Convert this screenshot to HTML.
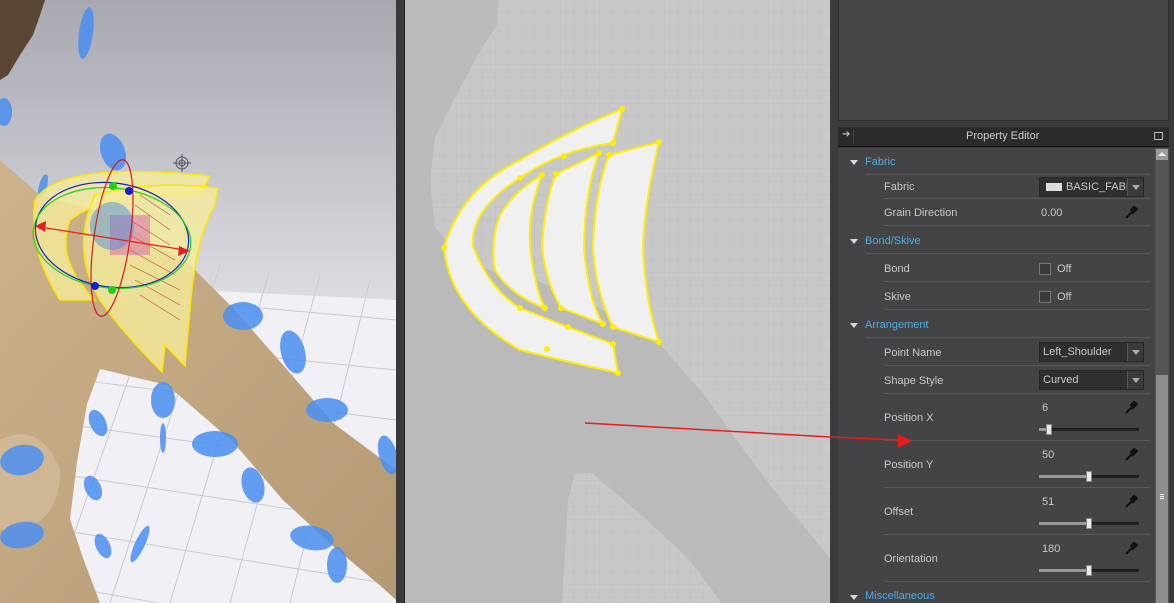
<!DOCTYPE html>
<html><head><meta charset="utf-8"><style>
*{margin:0;padding:0;box-sizing:border-box}
html,body{width:1174px;height:603px;overflow:hidden}
body{background:#2e2e2e;font-family:"Liberation Sans",sans-serif;position:relative}
.abs{position:absolute}
.t{position:absolute;font-size:11px;color:#c8c8c8;white-space:nowrap}
.sec{color:#4aaee6}
.ln{position:absolute;height:1px;background:#5a5a5c}
.tri{position:absolute;width:0;height:0;border-left:4px solid transparent;border-right:4px solid transparent;border-top:5px solid #d8d8d8}
.dd{position:absolute;background:#2f2f31;border:1px solid #262626;height:20px}
.dd .a{position:absolute;right:0;top:0;width:16px;height:18px;border-left:1px solid #555;background:#3a3a3c}
.dd .a:after{content:"";position:absolute;left:4px;top:7px;border-left:4px solid transparent;border-right:4px solid transparent;border-top:5px solid #aaa}
.cb{position:absolute;width:12px;height:12px;background:#3a3a3c;border:1px solid #777}
.trk{position:absolute;height:3px;background:#222;border-top:1px solid #1a1a1a}
.fill{position:absolute;height:3px;background:#999}
.thumb{position:absolute;width:6px;height:11px;background:#e8e8e8;border:1px solid #888}
.wr{position:absolute;width:14px;height:14px}
</style></head><body>

<!-- Left 3D viewport -->
<svg class="abs" style="left:0;top:0" width="396" height="603" viewBox="0 0 396 603">
<defs>
<linearGradient id="bg" x1="0" y1="0" x2="0" y2="1">
<stop offset="0" stop-color="#a8a8b0"/><stop offset="0.5" stop-color="#dcdce2"/><stop offset="1" stop-color="#e4e4ea"/></linearGradient>
<linearGradient id="sk" x1="0" y1="0" x2="1" y2="1"><stop offset="0" stop-color="#cdb38c"/><stop offset="1" stop-color="#b39a74"/></linearGradient>
</defs>
<rect width="396" height="603" fill="url(#bg)"/>
<polygon points="0,280 396,300 396,603 0,603" fill="#f1f1f5"/>
<g stroke="#c9c9d0" stroke-width="1" fill="none">
<path d="M60,290 L396,320 M0,330 L396,370 M0,370 L396,420 M0,415 L396,470 M0,465 L396,525 M0,520 L396,585 M0,575 L396,645"/>
<path d="M270,270 L170,603 M320,275 L230,603 M370,280 L290,603 M220,265 L110,603 M170,260 L50,603 M120,255 L0,590"/>
</g>
<polygon points="0,160 40,195 110,215 190,265 233,308 283,365 333,423 396,470 396,600 383,588 333,546 283,500 233,442 167,385 100,369 87,404 77,462 70,519 83,558 100,603 0,603" fill="url(#sk)"/>
<path d="M0,440 Q40,420 60,470 Q60,520 20,530 L0,530Z" fill="#d8c2a0" opacity="0.6"/>
<path d="M0,0 L45,0 L40,15 L33,35 L20,55 L8,75 L0,80Z" fill="#5a4634"/>
<g fill="#4a8ef0" opacity="0.85">
<ellipse cx="86" cy="33" rx="7" ry="26" transform="rotate(8 86 33)"/>
<ellipse cx="4" cy="112" rx="8" ry="14"/>
<ellipse cx="113" cy="152" rx="12" ry="19" transform="rotate(-20 113 152)"/>
<ellipse cx="243" cy="316" rx="20" ry="14"/>
<ellipse cx="293" cy="352" rx="12" ry="22" transform="rotate(-15 293 352)"/>
<ellipse cx="163" cy="400" rx="12" ry="18"/>
<ellipse cx="327" cy="410" rx="21" ry="12"/>
<ellipse cx="98" cy="423" rx="8" ry="14" transform="rotate(-25 98 423)"/>
<ellipse cx="215" cy="444" rx="23" ry="13"/>
<ellipse cx="163" cy="438" rx="3" ry="15"/>
<ellipse cx="253" cy="485" rx="11" ry="18" transform="rotate(-15 253 485)"/>
<ellipse cx="22" cy="460" rx="22" ry="15" transform="rotate(-10 22 460)"/>
<ellipse cx="388" cy="455" rx="9" ry="20" transform="rotate(-15 388 455)"/>
<ellipse cx="93" cy="488" rx="8" ry="13" transform="rotate(-25 93 488)"/>
<ellipse cx="22" cy="535" rx="22" ry="13" transform="rotate(-10 22 535)"/>
<ellipse cx="103" cy="546" rx="7" ry="13" transform="rotate(-25 103 546)"/>
<ellipse cx="140" cy="544" rx="5" ry="20" transform="rotate(25 140 544)"/>
<ellipse cx="312" cy="538" rx="22" ry="12" transform="rotate(10 312 538)"/>
<ellipse cx="337" cy="565" rx="10" ry="18"/>
<ellipse cx="43" cy="186" rx="4" ry="12" transform="rotate(15 43 186)"/>
</g>
<g fill="#f5ec9a" fill-opacity="0.8" stroke="#ffe600" stroke-width="1.5">
<path d="M35,200 Q60,160 210,176 L200,195 Q110,190 70,220 Q55,260 95,300 L60,300 Q28,250 35,200Z"/>
<path d="M95,195 Q150,180 218,188 L215,205 Q195,240 190,310 L185,366 L165,345 L162,372 Q120,330 100,300 Q70,250 95,195Z"/>
</g>
<g stroke="#c03030" stroke-width="0.8" opacity="0.6"><path d="M140,195 L170,215 M135,205 L170,230 M130,220 L170,245 M130,235 L175,260 M130,250 L175,275 M130,265 L180,290 M135,280 L180,305 M140,295 L180,320"/></g>
<rect x="110" y="215" width="40" height="40" fill="#d040b0" opacity="0.4"/>
<ellipse cx="112" cy="226" rx="22" ry="24" fill="#5090e0" opacity="0.5"/>
<ellipse cx="112" cy="235" rx="77" ry="52" transform="rotate(8 112 235)" fill="none" stroke="#1020d0" stroke-width="1.2"/>
<ellipse cx="112" cy="238" rx="79" ry="50" transform="rotate(6 112 238)" fill="none" stroke="#20d020" stroke-width="1.2"/>
<ellipse cx="112" cy="238" rx="18" ry="79" transform="rotate(8 112 238)" fill="none" stroke="#d02020" stroke-width="1.2"/>
<line x1="40" y1="227" x2="185" y2="250" stroke="#e02020" stroke-width="1.2"/>
<polygon points="35,226 46,221 45,232" fill="#e02020"/><polygon points="190,251 179,246 178,256" fill="#e02020"/>
<circle cx="113" cy="186" r="4" fill="#20d020"/><circle cx="129" cy="191" r="4" fill="#1020d0"/>
<circle cx="95" cy="286" r="4" fill="#1020d0"/><circle cx="112" cy="290" r="4" fill="#20d020"/>
<g stroke="#556" fill="none" stroke-width="1"><circle cx="182" cy="163" r="6"/><circle cx="182" cy="163" r="3"/><path d="M182,154v18M173,163h18"/></g>
</svg>
<div class="abs" style="left:396px;top:0;width:9px;height:603px;background:#3a3a3c;border-right:1px solid #222"></div>

<!-- Middle 2D view -->
<svg class="abs" style="left:405px;top:0" width="425" height="603" viewBox="405 0 425 603">
<defs><pattern id="g" x="405" y="0" width="13" height="13" patternUnits="userSpaceOnUse"><path d="M13,0V13H0" fill="none" stroke="#bfbfbf" stroke-width="1"/></pattern></defs>
<rect x="405" y="0" width="425" height="603" fill="#c8c8c8"/>
<rect x="405" y="0" width="425" height="603" fill="url(#g)"/>
<path d="M405,0 L498,0 L497,25 L478,54 L458,92 L435,138 L430,181 L435,227 L455,254 L485,269 L538,281 L592,304 L658,342 L705,396 L738,442 L772,488 L830,558 L830,603 L722,603 L688,558 L638,512 L592,473 L575,473 L568,500 L562,603 L405,603Z" fill="#bababa"/>
<g fill="#f0f0f0" stroke="#ffee00" stroke-width="2">
<path d="M622,109 L613,143 Q560,150 520,178 Q470,210 473,246 Q490,290 520,308 L568,327 L613,344 L618,373 Q560,360 520,350 Q450,310 444,248 Q460,190 520,160 Q570,130 622,109Z"/>
<path d="M542,175 Q528,210 530,246 Q535,290 545,308 Q510,295 495,270 Q490,240 500,215 Q515,190 542,175Z"/>
<path d="M556,174 L599,153 Q585,190 584,246 Q588,300 603,324 L561,308 Q545,280 542,246 Q545,200 556,174Z"/>
<path d="M609,155 L659,142 Q645,200 643,246 Q645,300 659,342 L613,327 Q595,290 593,246 Q595,190 609,155Z"/>
</g>
<g fill="#ffee00"><circle cx="622" cy="109" r="3"/><circle cx="613" cy="143" r="3"/><circle cx="444" cy="248" r="3"/><circle cx="613" cy="344" r="3"/><circle cx="618" cy="373" r="3"/><circle cx="564" cy="156" r="3"/><circle cx="520" cy="178" r="3"/><circle cx="520" cy="308" r="3"/><circle cx="568" cy="327" r="3"/><circle cx="547" cy="349" r="3"/><circle cx="542" cy="175" r="3"/><circle cx="545" cy="308" r="3"/><circle cx="556" cy="174" r="3"/><circle cx="599" cy="153" r="3"/><circle cx="603" cy="324" r="3"/><circle cx="561" cy="308" r="3"/><circle cx="609" cy="155" r="3"/><circle cx="659" cy="142" r="3"/><circle cx="659" cy="342" r="3"/><circle cx="613" cy="327" r="3"/></g>
<line x1="585" y1="423" x2="830" y2="437" stroke="#e81c1c" stroke-width="1.5"/>
</svg>
<div class="abs" style="left:830px;top:0;width:8px;height:603px;background:#3c3c3e"></div>

<!-- Right panel -->
<div class="abs" style="left:838px;top:0;width:336px;height:603px;background:#3a3a3c"></div>
<div class="abs" style="left:838px;top:0;width:331px;height:121px;background:#464648;border:1px solid #2c2c2c;border-top:none"></div>
<div class="abs" style="left:838px;top:127px;width:331px;height:20px;background:#2b2b2b;border-bottom:1px solid #111"></div>
<div class="t" style="left:842px;top:129px;color:#bbb;font-size:10px">➔</div>
<div class="abs" style="left:853px;top:130px;width:1px;height:14px;background:#444"></div>
<div class="t" style="left:966px;top:130px;color:#ccc">Property Editor</div>
<div class="abs" style="left:1154px;top:132px;width:9px;height:8px;border:1px solid #bbb"></div>
<div class="abs" style="left:838px;top:148px;width:317px;height:455px;background:#444446"></div>
<div class="abs" style="left:1155px;top:148px;width:14px;height:455px;background:#555557"></div>
<div class="abs" style="left:1156px;top:149px;width:12px;height:11px;background:#9a9a9a"></div>
<div class="abs" style="left:1158px;top:152px;border-left:4px solid transparent;border-right:4px solid transparent;border-bottom:4px solid #eee"></div>
<div class="abs" style="left:1156px;top:375px;width:12px;height:228px;background:#8e8e90"></div>
<div class="abs" style="left:1160px;top:494px;width:4px;height:1px;background:#eee;box-shadow:0 2px 0 #eee,0 4px 0 #eee"></div>

<div class="tri" style="left:850px;top:160px"></div><div class="t sec" style="left:865px;top:156px">Fabric</div>
<div class="ln" style="left:866px;top:174px;width:284px"></div>
<div class="t" style="left:884px;top:181px">Fabric</div>
<div class="dd" style="left:1039px;top:177px;width:105px"><div class="abs" style="left:6px;top:5px;width:16px;height:8px;background:#ddd"></div><span class="t" style="left:26px;top:3px">BASIC_FABF</span><div class="a"></div></div>
<div class="ln" style="left:884px;top:198px;width:266px"></div>
<div class="t" style="left:884px;top:207px">Grain Direction</div><div class="t" style="left:1041px;top:207px">0.00</div>
<svg class="wr" style="left:1124px;top:206px" viewBox="0 0 14 14"><path d="M2,12 L8,6 M7,4 L10,1 L13,3 L11,5 L9,7Z" stroke="#111" stroke-width="2" fill="#111"/></svg>
<div class="ln" style="left:884px;top:225px;width:266px"></div>

<div class="tri" style="left:850px;top:239px"></div><div class="t sec" style="left:865px;top:235px">Bond/Skive</div>
<div class="ln" style="left:866px;top:253px;width:284px"></div>
<div class="t" style="left:884px;top:263px">Bond</div><div class="cb" style="left:1039px;top:263px"></div><div class="t" style="left:1057px;top:263px">Off</div>
<div class="ln" style="left:884px;top:281px;width:266px"></div>
<div class="t" style="left:884px;top:291px">Skive</div><div class="cb" style="left:1039px;top:291px"></div><div class="t" style="left:1057px;top:291px">Off</div>
<div class="ln" style="left:884px;top:309px;width:266px"></div>

<div class="tri" style="left:850px;top:323px"></div><div class="t sec" style="left:865px;top:319px">Arrangement</div>
<div class="ln" style="left:866px;top:337px;width:284px"></div>
<div class="t" style="left:884px;top:347px">Point Name</div>
<div class="dd" style="left:1039px;top:342px;width:105px"><span class="t" style="left:3px;top:3px">Left_Shoulder</span><div class="a"></div></div>
<div class="ln" style="left:884px;top:365px;width:266px"></div>
<div class="t" style="left:884px;top:375px">Shape Style</div>
<div class="dd" style="left:1039px;top:370px;width:105px"><span class="t" style="left:3px;top:3px">Curved</span><div class="a"></div></div>
<div class="ln" style="left:884px;top:393px;width:266px"></div>

<div class="t" style="left:884px;top:412px">Position X</div><div class="t" style="left:1042px;top:402px">6</div>
<svg class="wr" style="left:1124px;top:401px" viewBox="0 0 14 14"><path d="M2,12 L8,6 M7,4 L10,1 L13,3 L11,5 L9,7Z" stroke="#111" stroke-width="2" fill="#111"/></svg>
<div class="trk" style="left:1039px;top:428px;width:100px"></div><div class="fill" style="left:1039px;top:428px;width:10px"></div><div class="thumb" style="left:1046px;top:424px"></div>
<div class="ln" style="left:884px;top:440px;width:266px"></div>
<div class="t" style="left:884px;top:459px">Position Y</div><div class="t" style="left:1042px;top:449px">50</div>
<svg class="wr" style="left:1124px;top:448px" viewBox="0 0 14 14"><path d="M2,12 L8,6 M7,4 L10,1 L13,3 L11,5 L9,7Z" stroke="#111" stroke-width="2" fill="#111"/></svg>
<div class="trk" style="left:1039px;top:475px;width:100px"></div><div class="fill" style="left:1039px;top:475px;width:50px"></div><div class="thumb" style="left:1086px;top:471px"></div>
<div class="ln" style="left:884px;top:487px;width:266px"></div>
<div class="t" style="left:884px;top:506px">Offset</div><div class="t" style="left:1042px;top:496px">51</div>
<svg class="wr" style="left:1124px;top:495px" viewBox="0 0 14 14"><path d="M2,12 L8,6 M7,4 L10,1 L13,3 L11,5 L9,7Z" stroke="#111" stroke-width="2" fill="#111"/></svg>
<div class="trk" style="left:1039px;top:522px;width:100px"></div><div class="fill" style="left:1039px;top:522px;width:50px"></div><div class="thumb" style="left:1086px;top:518px"></div>
<div class="ln" style="left:884px;top:534px;width:266px"></div>
<div class="t" style="left:884px;top:553px">Orientation</div><div class="t" style="left:1042px;top:543px">180</div>
<svg class="wr" style="left:1124px;top:542px" viewBox="0 0 14 14"><path d="M2,12 L8,6 M7,4 L10,1 L13,3 L11,5 L9,7Z" stroke="#111" stroke-width="2" fill="#111"/></svg>
<div class="trk" style="left:1039px;top:569px;width:100px"></div><div class="fill" style="left:1039px;top:569px;width:50px"></div><div class="thumb" style="left:1086px;top:565px"></div>
<div class="ln" style="left:884px;top:581px;width:266px"></div>
<div class="tri" style="left:850px;top:595px"></div><div class="t sec" style="left:865px;top:590px;line-height:12px;height:13px;overflow:hidden">Miscellaneous</div>

<!-- arrow head overlapping panel -->
<svg class="abs" style="left:830px;top:420px" width="100" height="40"><line x1="0" y1="17" x2="72" y2="20" stroke="#e81c1c" stroke-width="1.5"/><polygon points="68,14 82,21 68,28" fill="#e81c1c"/></svg>
</body></html>
